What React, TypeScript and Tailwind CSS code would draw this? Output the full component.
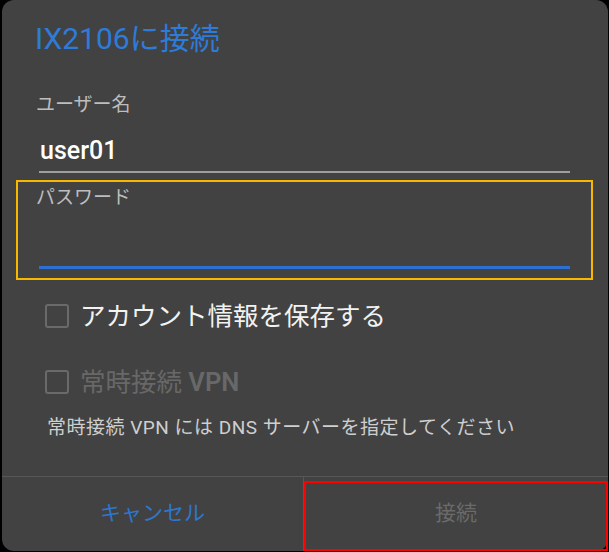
const font = "font-['Roboto','Noto_Sans_CJK_JP',sans-serif]";

function Checkbox({ label, disabled }: { label: React.ReactNode; disabled?: boolean }) {
  return (
    <div className="flex h-[40px] items-center gap-[11px] pl-[43px]">
      <div className="h-[24px] w-[24px] rounded-[3px] border-2 border-[#6a6a6a]" />
      <div
        className={
          "text-[25.5px] leading-[40px] " + (disabled ? "text-[#686868]" : "text-[#f2f2f2]")
        }
      >
        {label}
      </div>
    </div>
  );
}

export default function App() {
  return (
    <div className={`h-[552px] w-[609px] bg-black pl-[2px] ${font}`}>
      <div className="flex h-[551px] w-[606px] flex-col rounded-[12px] bg-[#424242]">
        <div className="flex flex-1 flex-col">
          <h1 className="ml-[33px] mt-[19px] h-[40px] text-[30px] leading-[40px] text-[#2e7bd8]">
            IX2106に接続
          </h1>

          {/* username */}
          <div className="ml-[37px] mt-[34px] w-[531px]">
            <div className="-ml-[3px] h-[24px] text-[19px] leading-[24px] text-[#bdbdbd]">
              ユーザー名
            </div>
            <div className="mt-[18px] h-[32px] pl-[1px] text-[25px] font-medium leading-[32px] text-white">
              user01
            </div>
            <div className="mt-[4px] h-[2px] bg-[#9e9e9e]" />
          </div>

          {/* password (highlighted) */}
          <div className="ml-[14px] mt-[7px] w-[577px] border-2 border-[#f8b800] px-[21px] pb-[9px] pt-[3.5px]">
            <div className="-ml-[3px] h-[24px] text-[19px] leading-[24px] text-[#bdbdbd]">
              パスワード
            </div>
            <div className="mt-[56.5px] h-[3px] bg-[#2d6fd2]" />
          </div>

          <div className="mt-[16px]">
            <Checkbox label="アカウント情報を保存する" />
          </div>
          <div className="mt-[25.5px]">
            <Checkbox
              disabled
              label={
                <>
                  常時接続 <span className="font-semibold">VPN</span>
                </>
              }
            />
          </div>
          <p className="ml-[45px] mt-[14px] h-[24px] text-[19px] leading-[24px] tracking-[0.5px] text-[#cfcfcf]">
            常時接続 VPN には DNS サーバーを指定してください
          </p>
        </div>

        {/* buttons */}
        <div className="flex h-[75px] border-t border-[#575757]">
          <button className="flex w-[302px] items-center justify-center border-r border-[#575757] text-[21px] text-[#2f76cc]">
            キャンセル
          </button>
          <div className="flex flex-1 pt-[4px]">
            <button className="flex flex-1 items-center justify-center border-2 border-[#ff0000] pb-[4px] text-[21px] text-[#6a6a6a]">
              接続
            </button>
          </div>
        </div>
      </div>
    </div>
  );
}
